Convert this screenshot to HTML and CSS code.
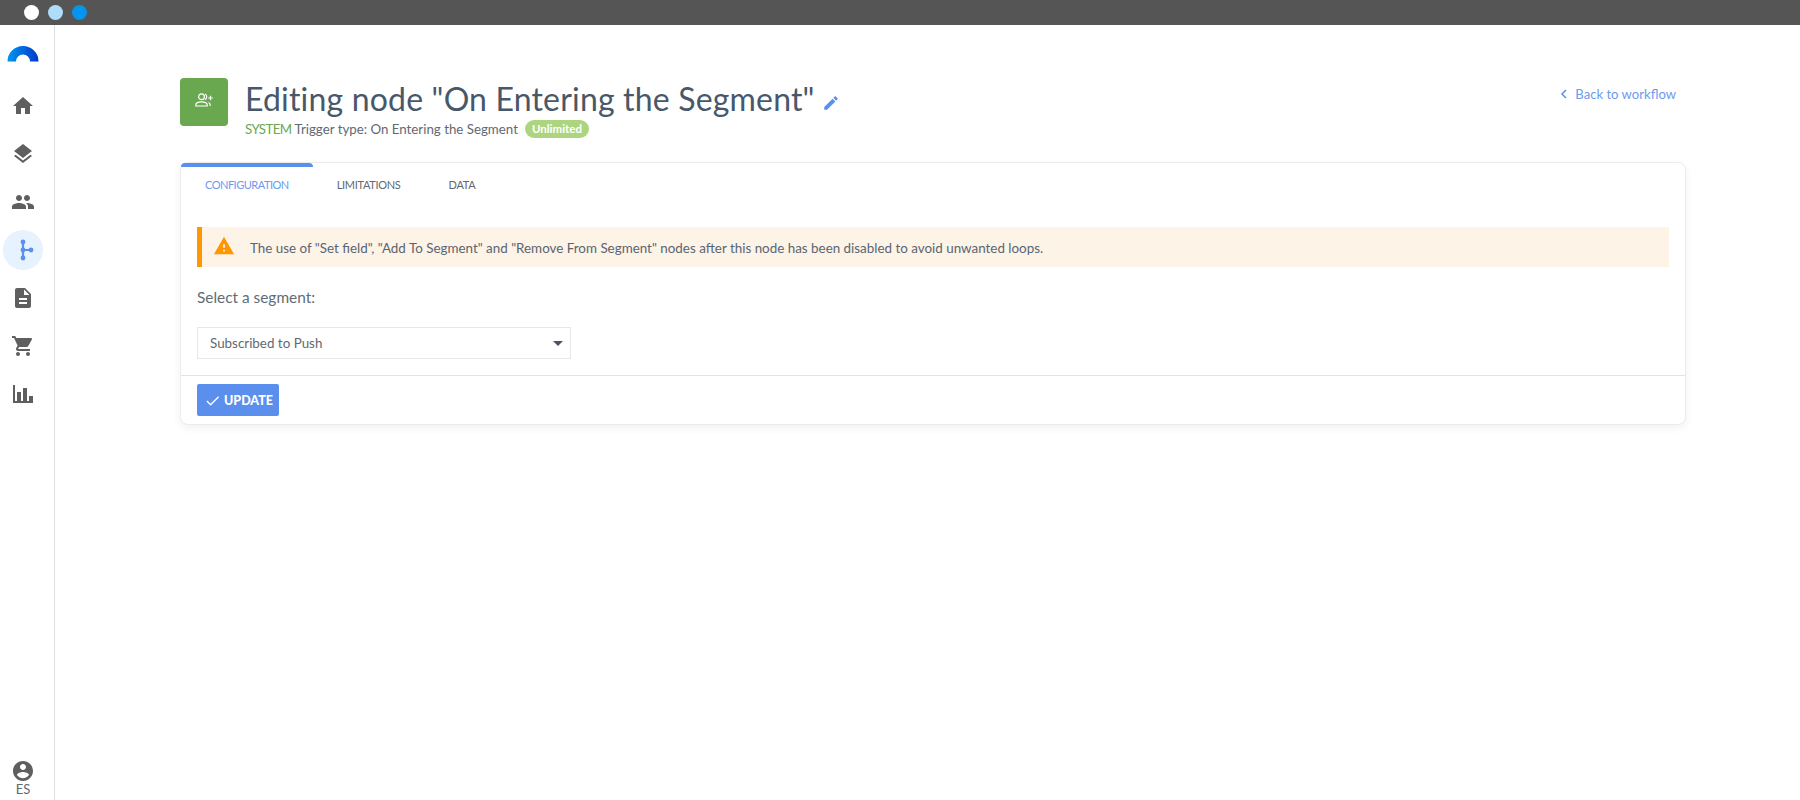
FILE: index.html
```html
<!DOCTYPE html>
<html lang="en">
<head>
<meta charset="utf-8">
<title>Editing node</title>
<link rel="stylesheet" href="styles.css">
</head>
<body>
<div class="topbar"><span class="dot dot-white"></span><span class="dot dot-light"></span><span class="dot dot-blue"></span></div>
<div class="shell">
  <nav class="sidebar">
    <div class="logo">
      <svg width="32" height="17" viewBox="0 0 32 17"><defs><linearGradient id="lg" x1="0" x2="1" y1="0" y2="0"><stop offset="0" stop-color="#0096ee"/><stop offset="1" stop-color="#0038cc"/></linearGradient></defs><path d="M0.5 16.5a15.5 15.5 0 0 1 31 0h-8.5a7 7 0 0 0-14 0z" fill="url(#lg)"/></svg>
    </div>
    <a class="nav-item"><svg class="ic" viewBox="0 0 24 24"><path d="M10 20v-6h4v6h5v-8h3L12 3 2 12h3v8z"/></svg></a>
    <a class="nav-item"><svg class="ic" viewBox="0 0 24 24"><path d="M11.99 18.54l-7.37-5.73L3 14.07l9 7 9-7-1.63-1.27-7.38 5.74zM12 16l7.36-5.73L21 9l-9-7-9 7 1.63 1.27L12 16z"/></svg></a>
    <a class="nav-item"><svg class="ic" viewBox="0 0 24 24"><path d="M16 11c1.66 0 2.99-1.34 2.99-3S17.66 5 16 5c-1.66 0-3 1.34-3 3s1.34 3 3 3zm-8 0c1.66 0 2.99-1.34 2.99-3S9.66 5 8 5C6.34 5 5 6.34 5 8s1.34 3 3 3zm0 2c-2.33 0-7 1.17-7 3.5V19h14v-2.5c0-2.33-4.67-3.5-7-3.5zm8 0c-.29 0-.62.02-.97.05 1.16.84 1.97 1.97 1.97 3.45V19h6v-2.5c0-2.33-4.67-3.5-7-3.5z"/></svg></a>
    <a class="nav-item nav-active"><span class="nav-circle"><svg class="ic ic-blue" viewBox="0 0 24 24"><path class="wf-line" d="M12 4v16M12 12h8"/><circle cx="12" cy="4" r="2.4"/><circle cx="12" cy="12" r="2.4"/><circle cx="12" cy="20" r="2.4"/><circle cx="20" cy="12" r="2.4"/></svg></span></a>
    <a class="nav-item"><svg class="ic" viewBox="0 0 24 24"><path d="M14 2H6c-1.1 0-1.99.9-1.99 2L4 20c0 1.1.89 2 1.99 2H18c1.1 0 2-.9 2-2V8l-6-6zm2 16H8v-2h8v2zm0-4H8v-2h8v2zm-3-5V3.5L18.5 9H13z"/></svg></a>
    <a class="nav-item"><svg class="ic" viewBox="0 0 24 24"><path d="M7 18c-1.1 0-1.99.9-1.99 2S5.9 22 7 22s2-.9 2-2-.9-2-2-2zM1 2v2h2l3.6 7.59-1.35 2.45c-.16.28-.25.61-.25.96 0 1.1.9 2 2 2h12v-2H7.42c-.14 0-.25-.11-.25-.25l.03-.12.9-1.63h7.45c.75 0 1.41-.41 1.75-1.03l3.58-6.49c.08-.14.12-.31.12-.48 0-.55-.45-1-1-1H5.21l-.94-2H1zm16 16c-1.1 0-1.99.9-1.99 2s.89 2 1.99 2 2-.9 2-2-.9-2-2-2z"/></svg></a>
    <a class="nav-item"><svg class="ic" viewBox="0 0 24 24"><path d="M2 3h2v18H2zM6 10h4v9H6zM12 6h4v13h-4zM18 14h4v5h-4zM2 19h20v2H2z"/></svg></a>
    <div class="account">
      <svg class="ic" viewBox="0 0 24 24"><path d="M12 2C6.48 2 2 6.48 2 12s4.48 10 10 10 10-4.48 10-10S17.52 2 12 2zm0 3c1.66 0 3 1.34 3 3s-1.34 3-3 3-3-1.34-3-3 1.34-3 3-3zm0 14.2c-2.5 0-4.71-1.28-6-3.22.03-1.99 4-3.08 6-3.08 1.99 0 5.97 1.09 6 3.08-1.29 1.94-3.5 3.22-6 3.22z"/></svg>
      <span class="lang">ES</span>
    </div>
  </nav>
  <main class="main">
    <header class="page-head">
      <div class="node-icon">
        <svg width="20" height="20" viewBox="0 0 20 20" class="node-svg"><circle cx="7.500" cy="4.800" r="2.900"/><path d="M1.800 14v-1c0-2 2.900-3.100 5.700-3.100s5.700 1.100 5.700 3.100v1z"/><path d="M11 2c1.100.4 1.700 1.500 1.700 2.800s-.6 2.400-1.700 2.800M14.500 10.500c1.100.5 1.700 1.400 1.700 2.500v1"/><path d="M14.200 6h4.600M16.500 3.700v4.600"/></svg>
      </div>
      <div class="head-text">
        <h1 class="title"><span>Editing node "On Entering the Segment"</span><svg class="edit-ic" viewBox="0 0 24 24"><path d="M3 17.250V21h3.750L17.810 9.940l-3.750-3.750L3 17.250zM20.710 7.040c.39-.39.39-1.020 0-1.410l-2.340-2.340c-.39-.39-1.020-.39-1.410 0l-1.830 1.830 3.750 3.750 1.830-1.830z"/></svg></h1>
        <div class="subtitle"><span class="system">SYSTEM</span> Trigger type: On Entering the Segment <span class="badge">Unlimited</span></div>
      </div>
      <a class="back"><svg class="back-ic" viewBox="0 0 8 12"><path d="M6 2 2 6l4 4"/></svg>Back to workflow</a>
    </header>
    <section class="card">
      <div class="tabs">
        <a class="tab tab-active">CONFIGURATION</a>
        <a class="tab">LIMITATIONS</a>
        <a class="tab">DATA</a>
      </div>
      <div class="card-body">
        <div class="alert">
          <svg class="warn-ic" viewBox="0 0 24 24"><path d="M1 21h22L12 2 1 21zm12-3h-2v-2h2v2zm0-4h-2v-4h2v4z"/></svg>
          <span class="alert-text">The use of "Set field", "Add To Segment" and "Remove From Segment" nodes after this node has been disabled to avoid unwanted loops.</span>
        </div>
        <label class="field-label">Select a segment:</label>
        <div class="select"><span>Subscribed to Push</span><i class="caret"></i></div>
      </div>
      <div class="card-foot">
        <button class="btn"><svg class="check" viewBox="0 0 16 16"><path d="M2 8.500l4 4 8.500-8.500"/></svg>UPDATE</button>
      </div>
    </section>
  </main>
</div>
</body>
</html>
```
FILE: styles.css
```css
* { box-sizing: border-box; }
html, body { margin: 0; height: 800px; overflow: hidden; background: #fff; }
body { font-family: Lato, "Noto Sans", sans-serif; color: #5a6570; }
.topbar { height: 25px; background: #555; display: flex; align-items: center; gap: 9px; padding-left: 24px; }
.dot { width: 15px; height: 15px; border-radius: 50%; }
.dot-white { background: #fff; }
.dot-light { background: #aedcfa; }
.dot-blue { background: #0394ee; }
.shell { display: flex; height: 775px; }
.sidebar { width: 55px; border-right: 1px solid #dfdfdf; padding-right: 8px; display: flex; flex-direction: column; align-items: center; flex: none; }
.logo { height: 57px; padding-top: 20px; line-height: 0; }
.nav-item { height: 48px; width: 46px; display: flex; align-items: center; justify-content: center; flex: none; }
.ic { width: 24px; height: 24px; fill: #5f5f5f; display: block; }
.ic-blue { fill: #5b8fee; }
.wf-line { fill: none; stroke: #5b8fee; stroke-width: 2.2; }
.nav-circle { width: 40px; height: 40px; border-radius: 50%; background: #e6f2fd; display: flex; align-items: center; justify-content: center; }
.account { margin-top: auto; display: flex; flex-direction: column; align-items: center; padding-bottom: 5px; }
.lang { font-size: 13px; line-height: 12px; color: #5f6a72; }
.main { flex: 1; padding: 53px 114px 0 125px; min-width: 0; }
.page-head { display: flex; align-items: flex-start; height: 84px; }
.node-icon { width: 48px; height: 48px; border-radius: 4px; background: #6aa84f; display: flex; align-items: center; justify-content: center; flex: none; }
.node-svg { fill: none; stroke: #fff; stroke-width: 1.200; }
.head-text { margin-left: 17px; flex: 1; }
.title { margin: -1px 0 0; font-size: 32px; line-height: 44px; font-weight: 400; color: #48586a; display: flex; align-items: center; letter-spacing: .18px; }
.edit-ic { width: 18px; height: 18px; fill: #5b8fee; margin-left: 7px; margin-top: 8px; }
.subtitle { font-size: 13.3px; line-height: 18px; margin-top: -1px; color: #5f6972; display: flex; align-items: center; gap: 3px; }
.system { color: #6aa84f; letter-spacing: -.6px; }
.badge { background: #add580; color: #fff; font-weight: 700; font-size: 11.5px; line-height: 18px; border-radius: 9px; padding: 0 7px; margin-left: 4px; }
.back { display: flex; align-items: center; font-size: 13.1px; color: #6c9bf0; margin-top: 8px; margin-right: 10px; }
.back-ic { width: 8px; height: 12px; fill: none; stroke: #5b8fee; stroke-width: 1.500; margin-right: 7px; }
.card { background: #fff; border: 1px solid #ececec; border-radius: 8px; box-shadow: 0 3px 8px rgba(0,0,0,.06); height: 263px; }
.tabs { display: flex; height: 64px; }
.tab { font-size: 11px; letter-spacing: -.3px; height: 38px; padding: 0 24px; display: flex; align-items: center; color: #5f6972; border-top: 4px solid transparent; }
.tab-active { color: #6c9bf0; letter-spacing: -.5px; border-top-color: #5b8fee; border-radius: 4px 4px 0 0; }
.card-body { padding: 0 16px; height: 149px; border-bottom: 1px solid #e3e3e3; }
.alert { height: 40px; background: #fdf3e7; border-left: 5px solid #ff9800; display: flex; align-items: center; font-size: 13.4px; color: #5a6570; padding-left: 11px; }
.alert-text { padding-top: 2px; }
.warn-ic { width: 22px; height: 22px; fill: #ff9800; margin-right: 15px; margin-top: -2px; flex: none; }
.field-label { display: block; font-size: 15.4px; line-height: 20px; margin-top: 20px; color: #626c75; }
.select { margin-top: 20px; width: 374px; height: 32px; border: 1px solid #e8e8e8; display: flex; align-items: center; justify-content: space-between; padding: 0 7px 0 12px; font-size: 13.4px; color: #5f6972; }
.caret { width: 0; height: 0; border-left: 5px solid transparent; border-right: 5px solid transparent; border-top: 5px solid #4a5560; }
.card-foot { padding: 8px 16px; }
.btn { width: 82px; height: 32px; background: #5b8fee; border: 0; border-radius: 2px; color: #fff; font: 900 12.5px Lato, sans-serif; display: flex; align-items: center; padding: 0 0 0 8px; }
.check { width: 15px; height: 15px; fill: none; stroke: #fff; stroke-width: 1.500; margin-right: 4px; }
```
